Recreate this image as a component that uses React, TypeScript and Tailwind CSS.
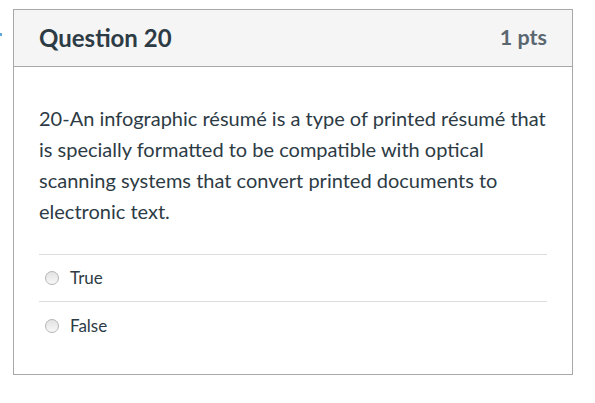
import React from 'react';

const answers = ['True', 'False'];

export default function App() {
    return (
        <div className="relative w-[595px] h-[403px] bg-white" style={{ fontFamily: 'Lato, "Open Sans", sans-serif' }}>
            <div className="absolute left-0 top-[33px] w-[2px] h-[3px] bg-[#5fa7d6]" />
            <div className="pt-[9px] pl-[13px]">
                <div className="w-[560px] h-[366px] border border-[#a8a8a8] flex flex-col">
                    <div className="h-[57px] bg-[#f5f5f5] border-b border-[#a8a8a8] flex items-center justify-between px-[25px] shrink-0">
                        <h2 className="text-[24px] font-bold text-[#2d3b45] leading-none">Question 20</h2>
                        <span className="text-[21.5px] font-bold text-[#5b6770] leading-none">1 pts</span>
                    </div>
                    <div className="pl-[25px] pr-[25px] pt-[36px]">
                        <p className="text-[20px] leading-[31px] text-[#2d3b45] mr-[-10px]">
                            20-An infographic résumé is a type of printed résumé that is specially formatted to be compatible with optical scanning systems that convert printed documents to electronic text.
                        </p>
                        <div className="mt-[27px] border-t border-[#dddddd]">
                            {answers.map((a, i) => (
                                <div key={a} className={`h-[47px] flex items-center gap-[11px] pl-[6px] ${i === 0 ? 'border-b border-[#dddddd]' : ''}`}>
                                    <span className="w-[14px] h-[14px] rounded-full border border-[#b5b5b5] bg-gradient-to-b from-[#e2e2e2] to-[#f8f8f8]" />
                                    <span className="text-[17px] text-[#2d3b45]">{a}</span>
                                </div>
                            ))}
                        </div>
                    </div>
                </div>
            </div>
        </div>
    );
}
